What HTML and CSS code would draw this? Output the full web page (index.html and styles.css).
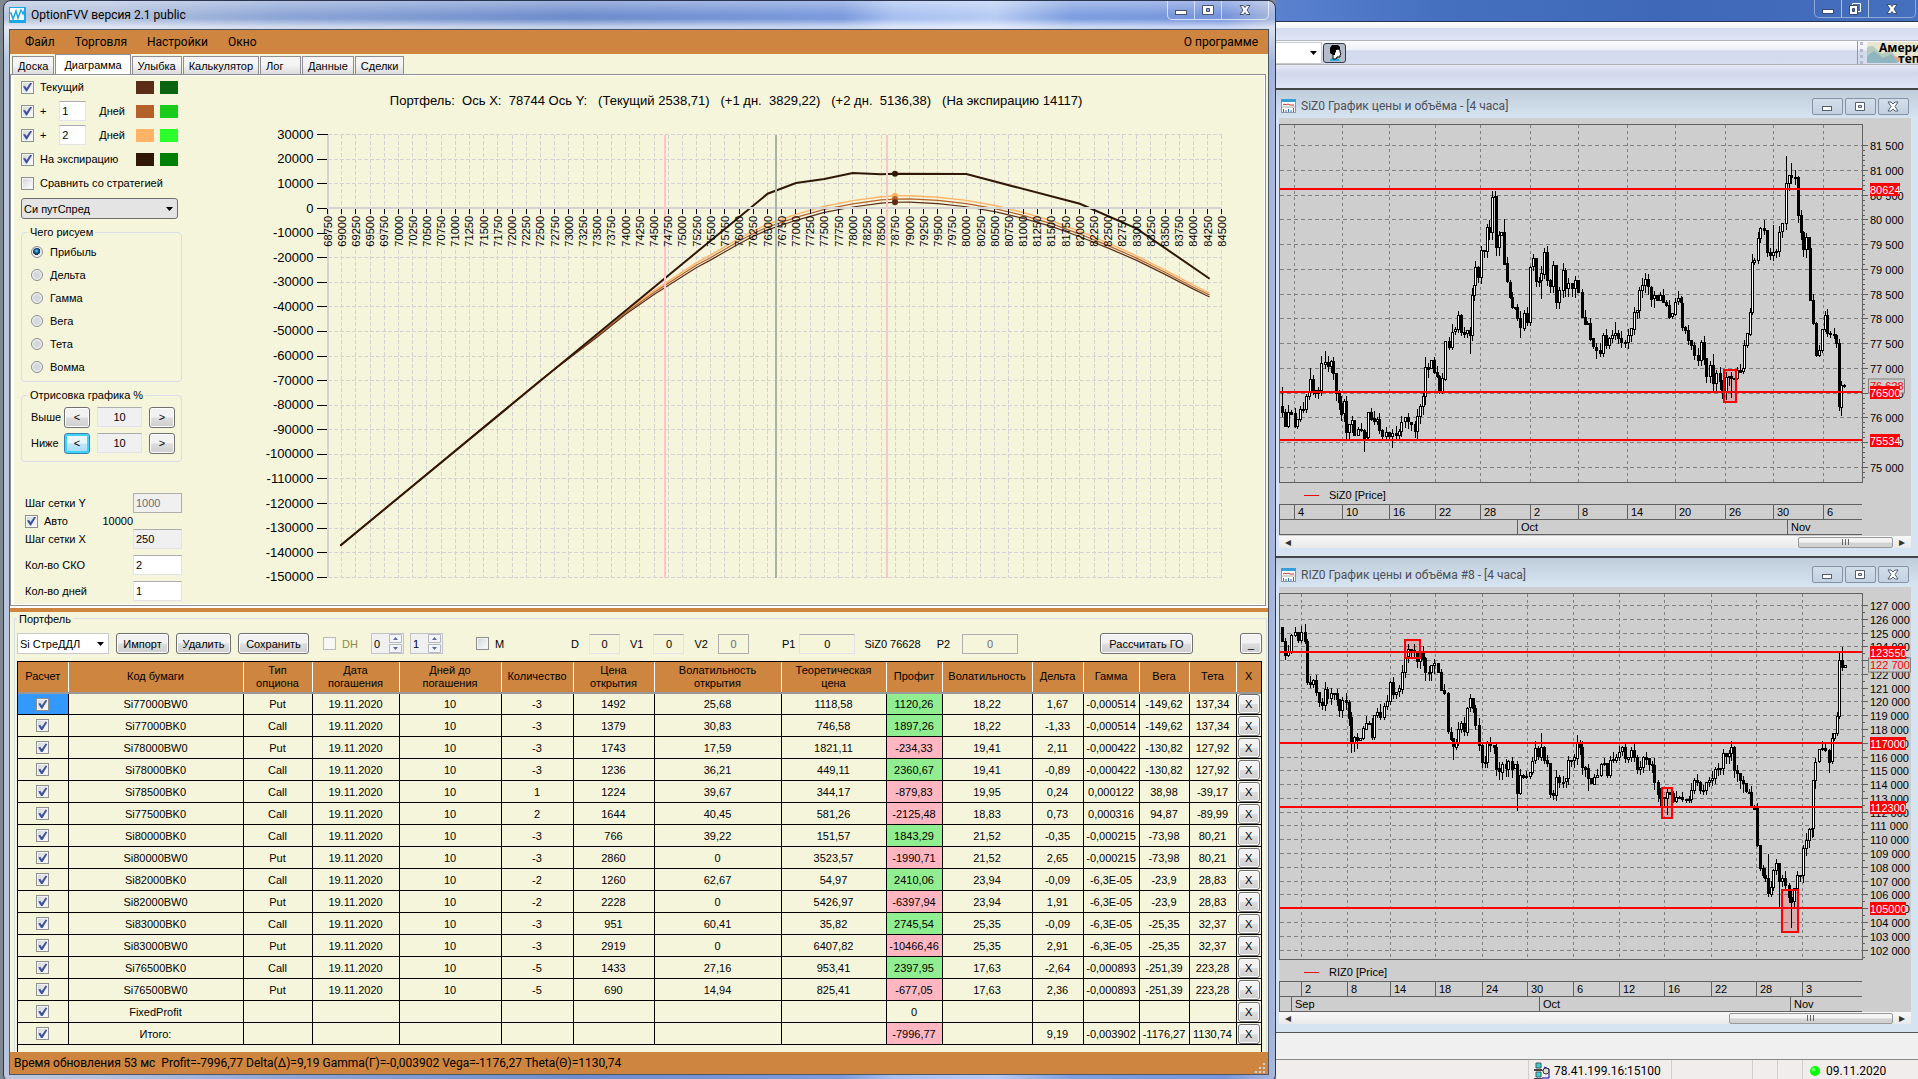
FILE: index.html
```html
<!DOCTYPE html>
<html lang="ru">
<head>
<meta charset="utf-8">
<meta name="viewport" content="width=device-width, initial-scale=1">
<title>OptionFVV версия 2.1 public</title>
<link rel="stylesheet" href="styles.css">
</head>
<body>
<div class="desktop">

<main class="app">
  <header class="app-title">
    <svg class="app-logo" width="17" height="16" viewBox="0 0 17 16" aria-hidden="true"><rect width="17" height="16" fill="#1ba7e2"/><rect x="1" y="1" width="14" height="12" fill="#fff"/><path d="M0 6l2 0 2 6 3-8 2 7 3-8 2 4 2-5" fill="none" stroke="#1ba7e2" stroke-width="1.500"/></svg>
    <h1 class="app-name">OptionFVV версия 2.1 public</h1>
    <div class="win-buttons">
      <button type="button" aria-label="Свернуть"><svg width="14" height="12" viewBox="0 0 14 12"><rect x="1.500" y="6.500" width="11" height="4" fill="#fff" stroke="#4a5468"/></svg></button>
      <button type="button" aria-label="Развернуть"><svg width="14" height="12" viewBox="0 0 14 12"><path d="M1.500 1.500h11v9h-11zM5.500 4.500h3v3h-3z" fill="#fff" fill-rule="evenodd" stroke="#4a5468"/></svg></button>
      <button type="button" class="wide" aria-label="Закрыть"><svg width="14" height="12" viewBox="0 0 14 12"><path d="M2 1.500h3.500L7 3.500l1.500-2H12L9 6l3 4.500H8.500L7 8.500l-1.500 2H2L5 6z" fill="#fff" stroke="#4a5468"/></svg></button>
    </div>
  </header>

  <div class="client">
    <nav class="menu">
      <button type="button">Файл</button>
      <button type="button">Торговля</button>
      <button type="button">Настройки</button>
      <button type="button">Окно</button>
      <button type="button" class="menu-about">О программе</button>
    </nav>

    <div class="tabs" role="tablist">
      <button type="button" role="tab">Доска</button>
      <button type="button" role="tab" class="active" aria-selected="true">Диаграмма</button>
      <button type="button" role="tab">Улыбка</button>
      <button type="button" role="tab">Калькулятор</button>
      <button type="button" role="tab" class="short">Лог</button>
      <button type="button" role="tab">Данные</button>
      <button type="button" role="tab">Сделки</button>
    </div>

    <section class="tab-page">
      <form class="side">
        <div class="series">
          <label class="check"><input type="checkbox" checked>Текущий</label>
          <span class="swatch brown"></span><span class="swatch forest"></span>
        </div>
        <div class="series">
          <label class="check"><input type="checkbox" checked>+</label>
          <input class="text days" type="text" value="1" id="days1"><label for="days1">Дней</label>
          <span class="swatch sienna"></span><span class="swatch green"></span>
        </div>
        <div class="series">
          <label class="check"><input type="checkbox" checked>+</label>
          <input class="text days" type="text" value="2" id="days2"><label for="days2">Дней</label>
          <span class="swatch peach"></span><span class="swatch lime"></span>
        </div>
        <div class="series">
          <label class="check"><input type="checkbox" checked>На экспирацию</label>
          <span class="swatch dark"></span><span class="swatch mid"></span>
        </div>
        <div class="series">
          <label class="check"><input type="checkbox">Сравнить со стратегией</label>
        </div>
        <select class="drop button-like" aria-label="Стратегия"><option>Си путСпред</option></select>

        <fieldset class="group radios">
          <legend>Чего рисуем</legend>
          <label><input type="radio" name="draw" checked>Прибыль</label>
          <label><input type="radio" name="draw">Дельта</label>
          <label><input type="radio" name="draw">Гамма</label>
          <label><input type="radio" name="draw">Вега</label>
          <label><input type="radio" name="draw">Тета</label>
          <label><input type="radio" name="draw">Вомма</label>
        </fieldset>

        <fieldset class="group range">
          <legend>Отрисовка графика %</legend>
          <div class="range-row"><label for="above">Выше</label><button type="button" class="btn">&lt;</button><input class="text muted" id="above" type="text" value="10"><button type="button" class="btn">&gt;</button></div>
          <div class="range-row"><label for="below">Ниже</label><button type="button" class="btn hot">&lt;</button><input class="text muted" id="below" type="text" value="10"><button type="button" class="btn">&gt;</button></div>
        </fieldset>

        <div class="steps">
          <label for="stepY">Шаг сетки Y</label><input class="text" id="stepY" type="text" value="1000" disabled>
          <div class="auto"><label class="check"><input type="checkbox" checked>Авто</label><output>10000</output></div>
          <label for="stepX">Шаг сетки X</label><input class="text muted" id="stepX" type="text" value="250">
          <label class="apart" for="sko">Кол-во СКО</label><input class="text apart" id="sko" type="text" value="2">
          <label class="apart" for="dayCount">Кол-во дней</label><input class="text apart" id="dayCount" type="text" value="1">
        </div>
      </form>
      <svg class="profit-chart" id="profit" viewBox="0 0 1074 528" role="img" aria-label="Диаграмма прибыли портфеля"></svg>
    </section>

    <div class="splitter"></div>

    <fieldset class="portfolio">
      <legend>Портфель</legend>
      <div class="toolbar">
        <div class="tools g8">
          <select class="drop combo" aria-label="Портфель"><option>Si СтреДДЛ</option></select>
          <button type="button" class="btn w53">Импорт</button>
          <button type="button" class="btn w55">Удалить</button>
          <button type="button" class="btn w70">Сохранить</button>
        </div>
        <div class="tools hedge">
          <label class="check off"><input type="checkbox" disabled>DH</label>
          <span class="spin"><input type="text" value="0" aria-label="DH 1"><svg width="14" height="20" viewBox="0 0 14 20"><path d="M.5.500h12v8H.5zM.5 10.500h12v8H.5z" fill="#f4f4f6" stroke="#b5b8c0"/><path d="M4 6l2.500-3L9 6zM4 13l2.500 3L9 13z" fill="#5a6a9c"/></svg></span>
          <span class="spin"><input type="text" value="1" aria-label="DH 2"><svg width="14" height="20" viewBox="0 0 14 20"><path d="M.5.500h12v8H.5zM.5 10.500h12v8H.5z" fill="#f4f4f6" stroke="#b5b8c0"/><path d="M4 6l2.500-3L9 6zM4 13l2.500 3L9 13z" fill="#5a6a9c"/></svg></span>
        </div>
        <div class="tools margin-flag"><label class="check"><input type="checkbox">M</label></div>
        <div class="tools volumes">
          <label for="fD">D</label><input class="text clear" id="fD" type="text" value="0">
          <label for="fV1">V1</label><input class="text clear" id="fV1" type="text" value="0">
          <label for="fV2">V2</label><input class="text clear" id="fV2" type="text" value="0" disabled>
        </div>
        <div class="tools prices">
          <label for="fP1">P1</label><input class="text clear" id="fP1" type="text" value="0">
          <span>SiZ0 76628</span>
          <label class="p2" for="fP2">P2</label><input class="text clear" id="fP2" type="text" value="0" disabled>
        </div>
        <div class="tools margin-calc">
          <button type="button" class="btn">Рассчитать ГО</button>
          <button type="button" class="btn mini">_</button>
        </div>
      </div>

      <div class="grid-box">
      <table class="grid">
        <colgroup><col style="width:50px"><col style="width:175px"><col style="width:69px"><col style="width:87px"><col style="width:102px"><col style="width:72px"><col style="width:81px"><col style="width:127px"><col style="width:105px"><col style="width:56px"><col style="width:90px"><col style="width:51px"><col style="width:56px"><col style="width:50px"><col style="width:47px"><col style="width:25px"></colgroup>
        <thead><tr><th>Расчет</th><th>Код бумаги</th><th>Тип<br>опциона</th><th>Дата<br>погашения</th><th>Дней до<br>погашения</th><th>Количество</th><th>Цена<br>открытия</th><th>Волатильность<br>открытия</th><th>Теоретическая<br>цена</th><th>Профит</th><th>Волатильность</th><th>Дельта</th><th>Гамма</th><th>Вега</th><th>Тета</th><th>X</th></tr></thead>
        <tbody>
        <tr><td class="picked"><input type="checkbox" checked aria-label="Расчет"></td><td>Si77000BW0</td><td>Put</td><td>19.11.2020</td><td>10</td><td>-3</td><td>1492</td><td>25,68</td><td>1118,58</td><td class="up">1120,26</td><td>18,22</td><td>1,67</td><td>-0,000514</td><td>-149,62</td><td>137,34</td><td><button type="button" class="btn">X</button></td></tr>
        <tr><td><input type="checkbox" checked aria-label="Расчет"></td><td>Si77000BK0</td><td>Call</td><td>19.11.2020</td><td>10</td><td>-3</td><td>1379</td><td>30,83</td><td>746,58</td><td class="up">1897,26</td><td>18,22</td><td>-1,33</td><td>-0,000514</td><td>-149,62</td><td>137,34</td><td><button type="button" class="btn">X</button></td></tr>
        <tr><td><input type="checkbox" checked aria-label="Расчет"></td><td>Si78000BW0</td><td>Put</td><td>19.11.2020</td><td>10</td><td>-3</td><td>1743</td><td>17,59</td><td>1821,11</td><td class="down">-234,33</td><td>19,41</td><td>2,11</td><td>-0,000422</td><td>-130,82</td><td>127,92</td><td><button type="button" class="btn">X</button></td></tr>
        <tr><td><input type="checkbox" checked aria-label="Расчет"></td><td>Si78000BK0</td><td>Call</td><td>19.11.2020</td><td>10</td><td>-3</td><td>1236</td><td>36,21</td><td>449,11</td><td class="up">2360,67</td><td>19,41</td><td>-0,89</td><td>-0,000422</td><td>-130,82</td><td>127,92</td><td><button type="button" class="btn">X</button></td></tr>
        <tr><td><input type="checkbox" checked aria-label="Расчет"></td><td>Si78500BK0</td><td>Call</td><td>19.11.2020</td><td>10</td><td>1</td><td>1224</td><td>39,67</td><td>344,17</td><td class="down">-879,83</td><td>19,95</td><td>0,24</td><td>0,000122</td><td>38,98</td><td>-39,17</td><td><button type="button" class="btn">X</button></td></tr>
        <tr><td><input type="checkbox" checked aria-label="Расчет"></td><td>Si77500BK0</td><td>Call</td><td>19.11.2020</td><td>10</td><td>2</td><td>1644</td><td>40,45</td><td>581,26</td><td class="down">-2125,48</td><td>18,83</td><td>0,73</td><td>0,000316</td><td>94,87</td><td>-89,99</td><td><button type="button" class="btn">X</button></td></tr>
        <tr><td><input type="checkbox" checked aria-label="Расчет"></td><td>Si80000BK0</td><td>Call</td><td>19.11.2020</td><td>10</td><td>-3</td><td>766</td><td>39,22</td><td>151,57</td><td class="up">1843,29</td><td>21,52</td><td>-0,35</td><td>-0,000215</td><td>-73,98</td><td>80,21</td><td><button type="button" class="btn">X</button></td></tr>
        <tr><td><input type="checkbox" checked aria-label="Расчет"></td><td>Si80000BW0</td><td>Put</td><td>19.11.2020</td><td>10</td><td>-3</td><td>2860</td><td>0</td><td>3523,57</td><td class="down">-1990,71</td><td>21,52</td><td>2,65</td><td>-0,000215</td><td>-73,98</td><td>80,21</td><td><button type="button" class="btn">X</button></td></tr>
        <tr><td><input type="checkbox" checked aria-label="Расчет"></td><td>Si82000BK0</td><td>Call</td><td>19.11.2020</td><td>10</td><td>-2</td><td>1260</td><td>62,67</td><td>54,97</td><td class="up">2410,06</td><td>23,94</td><td>-0,09</td><td>-6,3E-05</td><td>-23,9</td><td>28,83</td><td><button type="button" class="btn">X</button></td></tr>
        <tr><td><input type="checkbox" checked aria-label="Расчет"></td><td>Si82000BW0</td><td>Put</td><td>19.11.2020</td><td>10</td><td>-2</td><td>2228</td><td>0</td><td>5426,97</td><td class="down">-6397,94</td><td>23,94</td><td>1,91</td><td>-6,3E-05</td><td>-23,9</td><td>28,83</td><td><button type="button" class="btn">X</button></td></tr>
        <tr><td><input type="checkbox" checked aria-label="Расчет"></td><td>Si83000BK0</td><td>Call</td><td>19.11.2020</td><td>10</td><td>-3</td><td>951</td><td>60,41</td><td>35,82</td><td class="up">2745,54</td><td>25,35</td><td>-0,09</td><td>-6,3E-05</td><td>-25,35</td><td>32,37</td><td><button type="button" class="btn">X</button></td></tr>
        <tr><td><input type="checkbox" checked aria-label="Расчет"></td><td>Si83000BW0</td><td>Put</td><td>19.11.2020</td><td>10</td><td>-3</td><td>2919</td><td>0</td><td>6407,82</td><td class="down">-10466,46</td><td>25,35</td><td>2,91</td><td>-6,3E-05</td><td>-25,35</td><td>32,37</td><td><button type="button" class="btn">X</button></td></tr>
        <tr><td><input type="checkbox" checked aria-label="Расчет"></td><td>Si76500BK0</td><td>Call</td><td>19.11.2020</td><td>10</td><td>-5</td><td>1433</td><td>27,16</td><td>953,41</td><td class="up">2397,95</td><td>17,63</td><td>-2,64</td><td>-0,000893</td><td>-251,39</td><td>223,28</td><td><button type="button" class="btn">X</button></td></tr>
        <tr><td><input type="checkbox" checked aria-label="Расчет"></td><td>Si76500BW0</td><td>Put</td><td>19.11.2020</td><td>10</td><td>-5</td><td>690</td><td>14,94</td><td>825,41</td><td class="down">-677,05</td><td>17,63</td><td>2,36</td><td>-0,000893</td><td>-251,39</td><td>223,28</td><td><button type="button" class="btn">X</button></td></tr>
        <tr><td><input type="checkbox" checked aria-label="Расчет"></td><td>FixedProfit</td><td></td><td></td><td></td><td></td><td></td><td></td><td></td><td>0</td><td></td><td></td><td></td><td></td><td></td><td><button type="button" class="btn">X</button></td></tr>
        <tr><td><input type="checkbox" checked aria-label="Расчет"></td><td>Итого:</td><td></td><td></td><td></td><td></td><td></td><td></td><td></td><td class="down">-7996,77</td><td></td><td>9,19</td><td>-0,003902</td><td>-1176,27</td><td>1130,74</td><td><button type="button" class="btn">X</button></td></tr>
        </tbody>
      </table>
      </div>
    </fieldset>

    <footer class="status">
      <span>Время обновления 53 мс&nbsp; Profit=-7996,77 Delta(Δ)=9,19 Gamma(Γ)=-0,003902 Vega=-1176,27 Theta(Θ)=1130,74</span>
      <svg width="12" height="12" viewBox="0 0 12 12" aria-hidden="true"><path d="M9 1h2v2H9zM5 5h2v2H5zM9 5h2v2H9zM1 9h2v2H1zM5 9h2v2H5zM9 9h2v2H9z" fill="#fff" stroke="#a98" stroke-width=".5"/></svg>
    </footer>
  </div>
</main>

<aside class="terminal">
  <header class="term-title">
    <div class="win-buttons">
      <button type="button" aria-label="Свернуть"><svg width="14" height="12" viewBox="0 0 14 12"><rect x="1.500" y="6.500" width="11" height="4" fill="#fff" stroke="#3a4a70"/></svg></button>
      <button type="button" aria-label="Восстановить"><svg width="14" height="12" viewBox="0 0 14 12"><path d="M4.500.500h8v8h-8z" fill="none" stroke="#fff"/><path d="M1.500 2.500h8v9h-8zM4.500 5.500h2v3h-2z" fill="#fff" fill-rule="evenodd" stroke="#3a4a70"/></svg></button>
      <button type="button" class="wide" aria-label="Закрыть"><svg width="14" height="12" viewBox="0 0 14 12"><path d="M2 1.500h3.500L7 3.500l1.500-2H12L9 6l3 4.500H8.500L7 8.500l-1.500 2H2L5 6z" fill="#fff" stroke="#3a4a70"/></svg></button>
    </div>
  </header>
  <div class="term-menu"></div>
  <div class="term-tools">
    <select class="drop term-select" aria-label="Настройка"><option></option></select>
    <button type="button" class="face" aria-label="Профиль"><svg width="18" height="18" viewBox="0 0 18 18"><path d="M4 17v-2l3-1h5l2 3z" fill="#29a9d8"/><path d="M7 15v-4l1-5 4-1 2 1v2l1 2-1 1v2h-3l-1 2z" fill="#fff" stroke="#000"/><path d="M4 9V4l2-3h6l2 2v3l-2-1-2 1v2l-1 1v2H7z"/></svg></button>
    <div class="term-gap"></div>
    <div class="banner">
      <svg width="52" height="21" viewBox="0 0 52 21" aria-hidden="true"><rect width="52" height="21" fill="#e8e6cf"/><path d="M0 6q5-5 10 2l5 4 8-4 8 9v4H0z" fill="#b4cbbd"/><path d="M0 14l7-5 9 7 9-4 6 9H0z" fill="#8fb6bf"/><path d="M26 14l8 2-2 5z" fill="#e2a68e"/></svg>
      <strong>Америк<br><span>теп</span></strong>
    </div>
  </div>
  <div class="term-band"></div>

  <section class="mdi">
    <header class="mdi-title">
      <svg width="15" height="14" viewBox="0 0 15 14" aria-hidden="true"><rect x=".5" y=".5" width="14" height="13" fill="#fff" stroke="#8a97a8"/><rect width="15" height="3" fill="#35a0d5"/><path d="M2 6l2-1 1 1 2-1 2 1h4" fill="none" stroke="#c33"/><path d="M1 8h13" stroke="#aaa"/><path d="M2.500 10v3M5 11v2M7.500 10v3M10 11v2M12.500 9v4" stroke="#2a6fc0"/></svg>
      <h2>SiZ0 График цены и объёма - [4 часа]</h2>
      <div class="mdi-buttons"><button type="button" aria-label="Свернуть"><svg width="13" height="11" viewBox="0 0 13 11"><rect x="1.500" y="5.500" width="9" height="4" fill="#fff" stroke="#555f70"/></svg></button><button type="button" aria-label="Развернуть"><svg width="13" height="11" viewBox="0 0 13 11"><path d="M1.500 1.500h9v8h-9zM4.500 4.500h3v2h-3z" fill="#fff" fill-rule="evenodd" stroke="#555f70"/></svg></button><button type="button" aria-label="Закрыть"><svg width="13" height="11" viewBox="0 0 13 11"><path d="M1 1h3l2 2 2-2h3L8 5.500 11 10H8L6 8l-2 2H1l3-4.500z" fill="#fff" stroke="#555f70"/></svg></button></div>
    </header>
    <div class="mdi-body">
      <svg id="siz" viewBox="0 0 632 418" role="img" aria-label="SiZ0, график цены"></svg>
      <div class="scroll"><span class="arrow">◂</span><span class="track"></span><span class="thumb narrow"></span><span class="arrow">▸</span></div>
    </div>
  </section>

  <section class="mdi">
    <header class="mdi-title tall">
      <svg width="15" height="14" viewBox="0 0 15 14" aria-hidden="true"><rect x=".5" y=".5" width="14" height="13" fill="#fff" stroke="#8a97a8"/><rect width="15" height="3" fill="#35a0d5"/><path d="M2 6l2-1 1 1 2-1 2 1h4" fill="none" stroke="#c33"/><path d="M1 8h13" stroke="#aaa"/><path d="M2.500 10v3M5 11v2M7.500 10v3M10 11v2M12.500 9v4" stroke="#2a6fc0"/></svg>
      <h2>RIZ0 График цены и объёма #8 - [4 часа]</h2>
      <div class="mdi-buttons"><button type="button" aria-label="Свернуть"><svg width="13" height="11" viewBox="0 0 13 11"><rect x="1.500" y="5.500" width="9" height="4" fill="#fff" stroke="#555f70"/></svg></button><button type="button" aria-label="Развернуть"><svg width="13" height="11" viewBox="0 0 13 11"><path d="M1.500 1.500h9v8h-9zM4.500 4.500h3v2h-3z" fill="#fff" fill-rule="evenodd" stroke="#555f70"/></svg></button><button type="button" aria-label="Закрыть"><svg width="13" height="11" viewBox="0 0 13 11"><path d="M1 1h3l2 2 2-2h3L8 5.500 11 10H8L6 8l-2 2H1l3-4.500z" fill="#fff" stroke="#555f70"/></svg></button></div>
    </header>
    <div class="mdi-body">
      <svg id="riz" viewBox="0 0 632 425" role="img" aria-label="RIZ0, график цены"></svg>
      <div class="scroll"><span class="arrow">◂</span><span class="track"></span><span class="thumb"></span><span class="arrow">▸</span></div>
    </div>
  </section>

  <div class="term-rest"></div>
  <footer class="term-status">
    <span class="cell grow"></span>
    <span class="cell link"><svg width="16" height="18" viewBox="0 0 16 18" aria-hidden="true"><path d="M2 1h5v5H2zM2 10h5v5H2z" fill="#2fd6d6" stroke="#555"/><path d="M0 7h8l1 2H0zM0 16h8l1 2H0z" fill="#444"/><path d="M10 5l5 2v9H8" fill="none" stroke="#00c"/><circle cx="12" cy="9" r="3" fill="#ddd" stroke="#333"/></svg>78.41.199.16:15100</span>
    <span class="cell c81"></span><span class="cell c25"></span><span class="cell c25"></span>
    <span class="cell date"><i class="dot"></i>09.11.2020</span>
  </footer>
</aside>

</div>
<script src="charts.js"></script>
</body>
</html>
```
FILE: styles.css
```css
* { box-sizing: border-box; }
body {
  margin: 0;
  background: #7f8790;
  color: #000;
  font: 11px/14px "Liberation Sans", Arial, sans-serif;
}
h1, h2 { margin: 0; font-weight: normal; }
button, input, select { font: inherit; color: inherit; margin: 0; }
button { padding: 0; }
.desktop {
  display: grid;
  grid-template-columns: minmax(0, 1276fr) minmax(0, 642fr);
  min-height: 100vh;
}

/* Options window */
.app {
  display: flex;
  flex-direction: column;
  margin-left: 3px;
  padding: 0 6px 5px 5px;
  border: 1px solid #2b3550;
  border-radius: 8px 8px 6px 6px;
  background:
    linear-gradient(180deg, #ffffff55 0, #ffffff00 14px, #ffffff00 18px, #ffffff99 26px, #ffffff00 60px),
    linear-gradient(90deg, #b9c6dd 0, #b4c2de 8%, #8ea6d6 22%, #6f8dcc 45%, #7d9cdd 66%, #a9c1f0 70%, #b8ccf3 78%, #7f9fe0 84%, #7795dc 96%, #a8b8dd 100%);
}
.app-title, .term-title, .mdi-title, .menu, .status, .term-status { font: 12px/16px Roboto, "Open Sans", sans-serif; }
.app-title {
  display: flex;
  align-items: center;
  gap: 5px;
  height: 28px;
}
.app-name { flex: 1; font-size: 12px; }
.win-buttons {
  display: flex;
  align-self: flex-start;
  height: 19px;
  border: 1px solid #ffffffaa;
  border-top: 0;
  border-radius: 0 0 5px 5px;
}
.win-buttons button {
  display: grid;
  place-items: center;
  width: 27px;
  border: 0;
  border-right: 1px solid #ffffff99;
  background: none;
}
.win-buttons .wide { width: 46px; border-right: 0; }
.client {
  flex: 1;
  display: flex;
  flex-direction: column;
  border: 1px solid #4e5768;
  background: beige;
}
.menu {
  display: flex;
  gap: 20px;
  height: 24px;
  padding: 0 10px 0 15px;
  background: #cd853f;
}
.menu button { border: 0; background: none; }
.menu .menu-about { margin-left: auto; }

.tabs {
  display: flex;
  align-items: flex-end;
  height: 20px;
  padding-left: 2px;
}
.tabs button {
  height: 18px;
  padding: 0 5px;
  border: 1px solid #8c8e94;
  border-bottom: 0;
  background: linear-gradient(#f4f4f4 45%, #dcdcdc);
}
.tabs button + button { margin-left: 1px; }
.tabs .short { width: 41px; text-align: left; }
.tabs .active { height: 20px; padding: 0 8px; background: #fff; }
.tab-page {
  flex: 1;
  display: grid;
  grid-template-columns: 176px minmax(0, 1fr);
  margin-right: 2px;
  border: 1px solid #8c8e94;
  box-shadow: inset 0 0 0 1px #fff, inset 3px 0 0 #fff;
}
.profit-chart { width: 100%; height: 100%; }

.side { padding: 0 0 3px 10px; }
.series {
  display: flex;
  align-items: center;
  gap: 6px;
  width: 157px;
  height: 24px;
}
.check { display: flex; align-items: center; gap: 6px; white-space: nowrap; }
.series > .check { flex: 1; }
.series .days { margin-right: 7px; }
.days + label { margin-right: 5px; }
.swatch { width: 18px; height: 13px; }
.brown { background: #5c2d16; } .forest { background: #0a6410; }
.sienna { background: #b5622a; } .green { background: #19cc1c; }
.peach { background: #ffb366; } .lime { background: #2bff2b; }
.dark { background: #301707; } .mid { background: #008000; }

input[type=checkbox] {
  appearance: none;
  display: grid;
  place-items: center;
  width: 13px;
  height: 13px;
  border: 1px solid #8e8f8f;
  background: linear-gradient(135deg, #cfd3d9, #fff);
  box-shadow: inset 0 0 0 1px #f4f4f4;
}
input[type=checkbox]:checked::before {
  content: "";
  width: 9px;
  height: 9px;
  background: #41549b;
  clip-path: polygon(0 45%, 22% 38%, 40% 62%, 82% 0, 100% 8%, 45% 100%, 34% 100%);
}
input[type=checkbox]:disabled { border-color: #bcbcbc; background: #f8f8f4; }
input[type=radio] {
  appearance: none;
  width: 12px;
  height: 12px;
  border: 1px solid #8e8f8f;
  border-radius: 50%;
  background: radial-gradient(#d4d7dc 30%, #e8eaee);
  box-shadow: inset 0 0 0 1px #f4f4f4;
}
input[type=radio]:checked { background: radial-gradient(circle at 45% 40%, #7fd4f5 0, #0b4f86 28%, #0d2f52 45%, #e8e8e8 50%); }
.text {
  width: 100%;
  height: 20px;
  padding: 0 2px;
  border: 1px solid #e2e3ea;
  border-top-color: #abadb3;
  background: #fff;
}
.text.muted, .text:disabled { background: #f0f0f0; }
.text:disabled { border-color: #afafaf; color: #6d6d6d; }
.text.days { width: 27px; }
.text.clear { background: beige; text-align: center; }
.btn {
  height: 21px;
  border: 1px solid #707070;
  border-radius: 3px;
  background: linear-gradient(#f2f2f2 48%, #dddddd 52%, #cfcfcf);
  box-shadow: inset 0 0 0 1px #fcfcfc;
}
.btn.hot { border-color: #3c7fb1; background: linear-gradient(#eaf6fd 48%, #bee6fd 52%, #a7d9f5); box-shadow: inset 0 0 0 2px #3fd2f8; }
.drop {
  appearance: none;
  height: 21px;
  padding: 0 16px 0 2px;
  border: 1px solid #c8cacf;
  background: #fff url("data:image/svg+xml,%3Csvg xmlns='http://www.w3.org/2000/svg' width='7' height='4'%3E%3Cpath d='M0 0h7L3.500 4z'/%3E%3C/svg%3E") no-repeat right 4px center;
}
.button-like {
  display: block;
  width: 157px;
  margin-top: 3px;
  border-color: #707070;
  border-radius: 3px;
  background-color: #e4e4e4;
}
.group {
  width: 161px;
  margin: 6px 0 0;
  padding: 0 5px 0 9px;
  border: 1px solid #d5dfe5;
  border-radius: 4px;
}
.group legend { padding: 0 2px; margin-left: -3px; }
.radios { padding: 1px 5px 3px 9px; }
.radios label { display: flex; align-items: center; gap: 7px; height: 23px; }
.range { padding: 2px 5px 5px 9px; }
.range-row {
  display: grid;
  grid-template-columns: 33px 26px 59px 26px;
  align-items: center;
  height: 26px;
}
.range-row .text { width: 45px; justify-self: center; text-align: center; }
.steps {
  display: grid;
  grid-template-columns: 108px 49px;
  align-items: center;
  padding: 31px 0 0 4px;
}
.auto {
  grid-column: 1 / -1;
  display: flex;
  align-items: center;
  justify-content: space-between;
  width: 108px;
  height: 16px;
}
.steps .apart { margin-top: 6px; }

.splitter { height: 6px; border-top: 2px solid #fff; background: #cd853f; }

/* Portfolio */
.portfolio {
  min-width: 0;
  margin: 0 1px 0 4px;
  padding: 3px 4px 0 2px;
  border: 1px solid #d5dfe5;
  border-bottom: 0;
}
.portfolio legend { padding: 0 2px; }
.toolbar {
  display: flex;
  align-items: center;
  height: 30px;
  margin-bottom: 2px;
}
.tools { display: flex; align-items: center; white-space: nowrap; }
.g8 { gap: 7px; }
.combo { width: 92px; }
.w53 { width: 53px; }
.w55 { width: 55px; }
.w70 { width: 71px; }
.hedge { gap: 6px; margin-left: 14px; }
.off { margin-right: 7px; color: #8c8c46; }
.spin {
  display: flex;
  width: 33px;
  height: 21px;
  border: 1px solid #c2c4c9;
  background: #f0f0f0;
}
.spin input { width: 17px; padding: 0 2px; border: 0; background: none; }
.margin-flag { margin-left: 33px; }
.volumes { gap: 10px; margin-left: 67px; }
.volumes .text { width: 31px; }
.prices { gap: 4px; margin-left: 33px; }
.prices .text { width: 56px; }
.prices span { margin: 0 12px 0 5px; }
.prices .p2 { margin-right: 8px; }
.margin-calc { gap: 47px; margin-left: auto; }
.margin-calc .btn { width: 93px; }
.margin-calc .mini { width: 22px; }

.grid-box { padding-bottom: 7px; border: solid #000; border-width: 1px 1px 0; }
.grid { width: 100%; table-layout: fixed; border-collapse: collapse; text-align: center; }
.grid th {
  height: 31px;
  padding: 0;
  border-right: 1px solid #fff;
  border-bottom: 2px solid #999;
  background: #cd853f;
  font-weight: normal;
  line-height: 13px;
}
.grid th:last-child { border-right: 0; }
.grid td {
  height: 22px;
  padding: 0;
  border: 1px solid #000;
  border-top: 0;
  border-left: 0;
  overflow: hidden;
  white-space: nowrap;
}
.grid td:last-child { border-right: 0; }
.grid td input { margin: 0 auto; }
.grid .btn { display: block; width: 22px; height: 20px; margin: 0 auto; }
.picked { background: #3399ff; }
.up { background: #90ee90; }
.down { background: #ffb6c1; }
.status {
  display: flex;
  align-items: center;
  justify-content: space-between;
  height: 22px;
  padding: 0 2px 0 4px;
  background: #cd853f;
}
.status svg { align-self: flex-end; }

/* Trading terminal behind */
.terminal { display: flex; flex-direction: column; min-width: 0; background: #f0f0f0; }
.term-title {
  display: flex;
  justify-content: flex-end;
  height: 22px;
  padding-right: 2px;
  border-bottom: 1px solid #26334f;
  background: linear-gradient(90deg, #5a82cf, #4570c0 25%, #3f68b8 60%, #4570be);
}
.term-title .win-buttons { height: 18px; border-color: #ffffff66; }
.term-menu { height: 19px; border-bottom: 1px solid #b4b6be; background: linear-gradient(#fff 0, #f1f3fa 35%, #d5dbee 36%, #dfe4f5); }
.term-tools {
  display: flex;
  align-items: center;
  height: 24px;
  border-bottom: 1px solid #b0b0b0;
  background: linear-gradient(#fbfcfe 0, #eef0f8 40%, #d3d9ec 42%, #d6dcf0);
}
.term-select { width: 46px; height: 22px; border-left: 0; }
.face {
  display: grid;
  place-items: center;
  width: 23px;
  height: 20px;
  margin-left: 1px;
  border: 1px solid #333a48;
  border-radius: 3px;
  background: #b4bcc8;
}
.term-gap { flex: 1; align-self: stretch; border-right: 1px solid #999; }
.banner { display: flex; width: 58px; overflow: hidden; border-left: 3px dotted #b5b9c8; margin-left: 2px; }
.banner svg { flex: none; margin-left: 4px; }
.banner strong {
  margin-left: -40px;
  font: bold 12px/11px "Open Sans", "Noto Sans", sans-serif;
  white-space: nowrap;
}
.banner strong span { margin-left: 19px; }
.term-band { height: 23px; background: linear-gradient(#e6e9f5, #d2d8ec 35%, #dfe4f6); }
.mdi {
  padding: 0 7px 8px 3px;
  border-top: 2px solid #454545;
  background: linear-gradient(#bfcddb 0, #d6e3f1 28px);
}
.mdi-title {
  display: flex;
  align-items: center;
  gap: 5px;
  height: 28px;
  padding: 4px 2px 0;
  color: #4c4f55;
}
.mdi-title.tall { height: 29px; }
.mdi-title h2 { flex: 1; font-size: 12px; }
.mdi-buttons { display: flex; gap: 2px; }
.mdi-buttons button {
  display: grid;
  place-items: center;
  width: 31px;
  height: 17px;
  border: 1px solid #8591a5;
  border-radius: 2px;
  background: linear-gradient(#d3deea, #c2d0e0);
}
.mdi-body { background: #cecece; }
.mdi-body > svg { display: block; width: 100%; height: auto; }
.scroll {
  display: flex;
  align-items: center;
  height: 12px;
  background: linear-gradient(#f8f8f8, #e9e9e9);
}
.arrow { width: 18px; font: 12px/12px "DejaVu Sans", sans-serif; text-align: center; color: #333; }
.track { flex: 1; }
.thumb {
  width: 26%;
  height: 11px;
  border: 1px solid #999;
  border-radius: 2px;
  background:
    repeating-linear-gradient(90deg, #666 0 1px, transparent 1px 3px) center / 7px 6px no-repeat,
    linear-gradient(#f4f4f4 45%, #d2d2d2 55%);
}
.thumb.narrow { width: 15%; }
.term-rest { flex: 1; min-height: 20px; border-top: 1px solid #555; background: #f0f0f0; }
.term-status {
  display: flex;
  height: 22px;
  border-top: 1px solid #8a8a8a;
  background: #f1edec;
}
.cell { display: flex; align-items: center; border-right: 1px solid #d2cecd; }
.grow { flex: 1; }
.link { gap: 4px; width: 143px; padding-left: 5px; }
.c81 { width: 81px; }
.c25 { width: 25px; }
.date { gap: 6px; width: 115px; padding-left: 7px; border: 0; }
.dot { width: 10px; height: 10px; border-radius: 50%; background: radial-gradient(circle at 35% 35%, #aaffaa 0, #00ff00 30%); }

/* Chart text */
svg text { font-family: "Liberation Sans", Arial, sans-serif; }
.t11 { font-size: 11px; }
.t13 { font-size: 13px; }
.chart-title { font-size: 13px; white-space: pre; }
.price-up { fill: #fff; stroke: #000; shape-rendering: crispEdges; }
.price-down { fill: #000; stroke: #000; shape-rendering: crispEdges; }
.crisp { shape-rendering: crispEdges; }
```
FILE: charts.js
```js
const NS = "http://www.w3.org/2000/svg";

function add(parent, tag, attrs, text) {
  const node = document.createElementNS(NS, tag);
  for (const key in attrs) node.setAttribute(key, attrs[key]);
  if (text !== undefined) node.textContent = text;
  parent.appendChild(node);
  return node;
}
function line(parent, x1, y1, x2, y2, stroke, more) {
  return add(parent, "line", Object.assign({ x1, y1, x2, y2, stroke, class: "crisp" }, more));
}

/* Portfolio profit against the futures price */
(function profitChart() {
  const svg = document.getElementById("profit");
  const left = 140, right = 1031, top = 60, bottom = 501;
  const x = strike => left + (strike - 68750) / 15750 * (right - left);
  const y = value => 133 - value / 10000 * 24.5;

  const title = "Портфель:  Ось X:  78744 Ось Y:   (Текущий 2538,71)   (+1 дн.  3829,22)   (+2 дн.  5136,38)   (На экспирацию 14117)";
  add(svg, "text", { x: 547, y: 30, class: "chart-title", "text-anchor": "middle" }, title);

  for (let v = 30000; v >= -150000; v -= 10000) {
    if (v) line(svg, left, y(v), right, y(v), "#d3d3d3", { "stroke-dasharray": "4 2" });
    line(svg, left - 10, y(v), left, y(v), "#000");
    add(svg, "text", { x: 126, y: y(v) + 4, class: "t13", "text-anchor": "end" }, v);
  }
  for (let s = 69000; s <= 84500; s += 250)
    line(svg, x(s), top, x(s), bottom, "#d3d3d3", { "stroke-dasharray": "4 2" });
  line(svg, left, top, left, bottom, "#d3d3d3", { "stroke-width": 2 });

  const expiry = [[68975, -137100], [76500, 6000], [77000, 10340], [77500, 11970], [78000, 14420],
    [78500, 13960], [78744, 14117], [80000, 14000], [82000, 1900], [83000, -8160], [84285, -28570]];
  /* strike, profit today, gain per day */
  const current = [[68975, -137100, 0], [72500, -69800, 0], [73500, -52300, 400], [74000, -43000, 600],
    [74500, -35000, 800], [75250, -24000, 1000], [75500, -20900, 1000], [76000, -14300, 1100],
    [76250, -11300, 1100], [76500, -8700, 1150], [77000, -4800, 1200], [77500, -1600, 1250],
    [78000, 600, 1300], [78500, 2200, 1300], [78744, 2538, 1300], [79000, 2600, 1300],
    [79500, 2000, 1300], [80000, 700, 1300], [80500, -1300, 1250], [81000, -4000, 1200],
    [81500, -7300, 1150], [82000, -11500, 1100], [82500, -16100, 1000], [83000, -21100, 900],
    [83500, -26800, 850], [84000, -32800, 800], [84285, -36000, 800]];
  const draw = (points, stroke, width) =>
    add(svg, "polyline", { points: points.map(p => x(p[0]) + "," + y(p[1])).join(" "), fill: "none", stroke, "stroke-width": width });
  draw(current.map(p => [p[0], p[1] + 2 * p[2]]), "#ffb366", 1.4);
  draw(current.map(p => [p[0], p[1] + p[2]]), "#b5622a", 1.2);
  draw(current, "#5c2d16", 1.2);
  draw(expiry, "#301707", 2);
  line(svg, left, 133, right, 133, "#d3d3d3", { "stroke-width": 2 });
  for (const [value, fill] of [[5136, "#ffb366"], [3829, "#b5622a"], [2538, "#5c2d16"], [14117, "#301707"]])
    add(svg, "circle", { cx: x(78744), cy: y(value), r: 3, fill });

  line(svg, 476, top, 476, bottom, "#ffc4c8", { "stroke-width": 2 });
  line(svg, 697, top, 697, bottom, "#ffc4c8", { "stroke-width": 2 });
  line(svg, 587, top, 587, bottom, "#a9b2a9", { "stroke-width": 2 });

  for (let s = 68750; s <= 84500; s += 250) {
    line(svg, x(s), 134, x(s), 138, "#000");
    const tx = x(s) + 4;
    add(svg, "text", { x: tx, y: 171, class: "t11", transform: "rotate(-90 " + tx + " 171)" }, s);
  }
})();

/* Futures candles: closes are "time,level" pairs, wicks are "time,high,low" */
function candleChart(id, o) {
  const svg = document.getElementById(id);
  const right = 583;
  const X = t => Math.round(t / 2.42 - 9) + 0.5;
  const Y = l => Math.round(o.base + l / 3) + 0.5;
  const frame = "#606060";

  for (const gx of o.gridX) line(svg, gx, 7, gx, o.bottom, "#808080", { "stroke-dasharray": "3 3" });
  o.levels.forEach(([label, gy], i) => {
    line(svg, 1, gy, right, gy, "#808080", { "stroke-dasharray": "4 3" });
    line(svg, right, gy, right + 6, gy, frame);
    for (let k = 1; k < o.minor; k++) {
      const my = gy + o.step * k / o.minor;
      if (my < o.bottom) line(svg, right, my, right + 3, my, frame);
    }
    add(svg, "text", { x: 591, y: gy + 4, class: "t11" }, label);
  });
  add(svg, "rect", { x: 0.5, y: 6.5, width: right, height: o.bottom - 6, fill: "none", stroke: frame, class: "crisp" });

  for (const [bx, by, w, h] of o.boxes) add(svg, "rect", { x: bx, y: by, width: w, height: h, fill: "#ff0000", "fill-opacity": 0.15 });

  const wicks = {};
  for (const [t, high, low] of o.wicks) wicks[t] = [high, low];
  const bars = o.closes.trim().split(/\s+/).map(p => p.split(",").map(Number));
  bars.forEach(([t, close], i) => {
    const open = i ? bars[i - 1][1] : o.open;
    let high = Math.min(open, close) - (i * 37 % 26);
    let low = Math.max(open, close) + (i * 53 % 26);
    if (wicks[t]) {
      high = wicks[t][0] === null ? high : wicks[t][0];
      low = wicks[t][1] === null ? low : wicks[t][1];
    }
    line(svg, X(t), Y(high), X(t), Y(low), "#000");
    add(svg, "rect", {
      x: X(t) - 1, y: Y(Math.min(open, close)), width: 2,
      height: Math.max(1, Math.round(Math.abs(open - close) / 3)),
      class: close < open ? "price-up" : "price-down"
    });
  });

  for (const [bx, by, w, h] of o.boxes) add(svg, "rect", { x: bx, y: by, width: w, height: h, fill: "none", stroke: "#f00", "stroke-width": 2 });
  add(svg, "rect", { x: 589.5, y: o.last[1] - 7, width: o.tag + 6, height: 14, fill: "#cecece", stroke: "#808080" });
  add(svg, "text", { x: 591, y: o.last[1] + 4, class: "t11", fill: "#f00" }, o.last[0]);
  for (const [label, ly] of o.lines) {
    line(svg, 1, ly, right, ly, "#f00", { "stroke-width": 2 });
    add(svg, "rect", { x: 591, y: ly - 6, width: o.tag, height: 13, fill: "#f00" });
    add(svg, "text", { x: 591, y: ly + 5, class: "t11", fill: "#fff" }, label);
  }

  line(svg, 25, o.bottom + 13, 40, o.bottom + 13, "#f00");
  add(svg, "text", { x: 50, y: o.bottom + 17, class: "t11" }, o.name);
  const a = o.bottom + 22;
  for (const k of [0, 15, 30]) line(svg, 0, a + k, right, a + k, frame);
  line(svg, 0.5, a, 0.5, a + 30, frame);
  o.gridX.forEach((gx, i) => {
    line(svg, gx, a, gx, a + 15, frame);
    add(svg, "text", { x: gx + 4, y: a + 12, class: "t11" }, o.days[i]);
  });
  for (const [label, mx] of o.months) {
    line(svg, mx, a + 15, mx, a + 30, frame);
    add(svg, "text", { x: mx + 4, y: a + 27, class: "t11" }, label);
  }
}

function levels(from, to, by, firstY, step) {
  const out = [];
  for (let p = from, i = 0; p >= to; p -= by, i++) {
    const s = String(p);
    out.push([s.slice(0, -3) + " " + s.slice(-3), Math.round(firstY + i * step) + 0.5]);
  }
  return out;
}

candleChart("siz", {
  name: "SiZ0 [Price]", base: 172, bottom: 364, open: 348, tag: 30, minor: 5, step: 24.77,
  gridX: [15, 63, 110, 156, 201, 251, 299, 348, 396, 446, 494, 544],
  days: [4, 10, 16, 22, 28, 2, 8, 14, 20, 26, 30, 6],
  months: [["Oct", 238], ["Nov", 508]],
  levels: levels(81500, 75000, 500, 27, 24.77),
  last: ["76 628", 268],
  lines: [["80624", 71], ["76500", 274], ["75534", 322]],
  boxes: [[445, 252, 12, 32]],
  wicks: [[28, 288, 378], [98, 232, null], [132, 180, null], [228, null, 483], [296, null, 472], [376, 198, null],
    [456, 60, null], [484, null, 188], [537, -300, null], [566, -216, null], [606, null, 140], [664, -128, null],
    [657, null, 25], [790, null, 203], [834, 92, null], [908, -55, null], [1072, 190, 305], [1116, null, 320],
    [1195, -212, null], [1218, -198, null], [1248, -405, null], [1262, -385, null], [1349, 55, null],
    [1383, 270, 375], [1390, 280, 290]],
  closes: `28,365 36,408 44,365 52,370 60,408 66,388 72,358 80,357 87,318 94,305 98,268 104,300 110,310 117,300
    124,220 132,215 140,228 147,213 153,250 159,310 166,338 172,370 178,333 184,425 192,402 198,390 204,435
    212,418 220,420 228,445 232,440 238,365 245,385 252,395 258,388 264,420 272,438 280,425 288,438 296,428
    304,435 312,422 318,395 326,382 334,395 342,402 350,422 356,378 362,348 370,318 376,230 383,235 390,210
    397,247 404,258 410,305 417,265 424,152 432,170 440,125 448,118 456,75 463,125 470,130 477,120 484,135
    490,15 493,-15 497,-70 503,-40 510,-120 517,-118 524,-190 530,-175 537,-280 544,-282 548,-130 554,-165
    560,-175 566,-80 573,-25 580,20 586,50 593,52 598,85 606,112 614,68 621,95 628,-70 636,-95 643,-25
    650,-28 657,-50 664,-115 671,-30 678,-12 685,-75 693,35 700,0 708,-60 715,-5 722,-20 730,-5 738,-30
    745,5 754,80 762,100 768,98 775,145 782,170 790,180 798,190 805,135 813,165 820,145 828,135 834,130
    842,145 850,157 858,157 866,135 873,115 880,65 888,60 893,0 900,-15 908,-32 915,-10 922,25 930,15
    937,30 944,15 951,35 958,45 966,80 974,70 981,35 988,25 994,38 998,110 1005,120 1012,150 1020,165
    1027,195 1035,210 1042,155 1050,205 1056,258 1064,225 1072,280 1080,250 1088,275 1095,303 1104,262
    1110,258 1116,265 1124,265 1130,240 1138,245 1144,235 1147,165 1154,130 1161,65 1166,-85 1172,-90
    1180,-155 1187,-185 1195,-180 1202,-115 1210,-105 1218,-115 1225,-118 1232,-175 1240,-200 1248,-320
    1255,-345 1262,-340 1270,-338 1277,-225 1284,-175 1291,-125 1298,-160 1305,-125 1308,30 1315,100
    1321,195 1328,180 1335,118 1342,75 1349,130 1356,132 1364,135 1370,160 1376,350 1383,285 1390,287`
});

candleChart("riz", {
  name: "RIZ0 [Price]", base: -27, bottom: 372, open: 200, tag: 36, minor: 2, step: 13.78,
  gridX: [22, 68, 111, 156, 203, 248, 294, 340, 385, 432, 477, 523],
  days: [2, 8, 14, 18, 24, 30, 6, 12, 16, 22, 28, 3],
  months: [["Sep", 12], ["Oct", 260], ["Nov", 511]],
  levels: levels(127000, 102000, 1000, 18, 13.78),
  last: ["122 700", 78],
  lines: [["123550", 65], ["117000", 156], ["112300", 220], ["105000", 321]],
  boxes: [[126, 53, 15, 18], [383, 201, 10, 30], [503, 303, 16, 42]],
  wicks: [[36, null, 298], [76, 195, null], [196, null, 575], [349, 250, null], [400, 282, null], [444, null, 597],
    [598, null, 750], [656, 517, null], [686, null, 718], [770, null, 690], [961, 685, 762], [1205, 880, null],
    [1232, null, 1037], [1262, null, 1100], [1336, 540, null], [1352, null, 635], [1385, 258, 330], [1392, 312, 320]],
  closes: `28,243 36,285 44,275 52,225 60,215 68,240 76,215 84,243 90,365 97,372 104,360 111,395 118,425 125,435
    132,388 139,415 147,400 155,400 162,418 168,450 175,420 183,425 190,472 196,548 203,530 210,540 218,535
    225,505 232,488 239,490 246,532 252,465 260,455 267,470 275,437 283,423 290,365 297,402 305,395 312,385
    320,335 327,290 334,268 341,270 349,275 356,303 363,278 370,295 376,338 384,335 390,315 398,308 406,335
    413,390 422,400 430,515 437,535 444,560 451,548 456,508 463,490 470,515 477,443 484,415 491,445 497,495
    505,555 512,605 520,605 526,545 533,555 541,560 547,625 554,635 562,612 570,625 577,602 585,625 592,612
    598,700 606,645 613,650 620,648 628,635 634,602 641,565 648,590 656,560 663,600 671,608 678,700 686,705
    693,650 700,665 708,665 716,655 721,600 728,600 736,592 742,545 749,560 755,620 762,625 770,655 778,670
    785,650 792,645 800,612 808,608 815,645 823,600 830,598 838,590 845,575 852,562 859,595 866,590 873,570
    880,590 888,625 896,620 903,590 910,595 918,612 925,615 930,665 938,700 945,715 953,712 961,695 968,700
    975,725 983,712 990,712 998,718 1006,720 1013,718 1020,690 1027,660 1034,665 1041,690 1048,690 1055,665
    1062,660 1069,655 1076,628 1083,625 1090,625 1097,580 1104,590 1111,580 1116,562 1123,630 1130,640
    1137,660 1144,670 1151,695 1158,697 1165,740 1172,745 1178,855 1185,925 1192,945 1198,955 1205,1000
    1212,980 1217,930 1224,910 1232,965 1240,955 1247,975 1255,1010 1262,1025 1268,985 1276,945 1283,945
    1289,865 1296,840 1304,808 1312,805 1315,660 1320,605 1328,568 1336,565 1344,570 1352,605 1359,535
    1366,520 1371,468 1377,300 1385,320 1392,315`
});
```
